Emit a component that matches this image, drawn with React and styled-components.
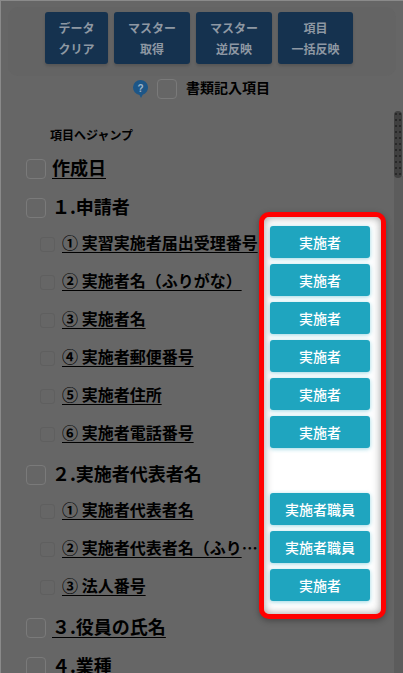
import React from "react";
import styled, { createGlobalStyle } from "styled-components";

const Global = createGlobalStyle`
  html, body { margin: 0; padding: 0; height: 100%; overflow: hidden; background: #666; }
  * { box-sizing: border-box; }
  #root { height: 100%; }
`;

const Page = styled.div`
  position: relative;
  width: 403px;
  height: 673px;
  overflow: hidden;
  background: #666;
  border-top: 1px solid #8a8a8a;
  border-left: 1px solid #8a8a8a;
  font-family: "Noto Sans CJK JP", "Noto Sans", sans-serif;
  color: #000;
`;

const TopPanel = styled.div`
  margin: 6px 7px 0 7px;
  height: 69px;
  padding: 5px 6px 0 0;
  border-radius: 10px;
  background: #646464;
  display: flex;
  justify-content: center;
  gap: 6px;
`;

const ToolButton = styled.div`
  width: ${(p) => p.$w}px;
  height: 52px;
  border-radius: 3px;
  background: #15324f;
  color: #8e98a3;
  font-size: 12px;
  font-weight: 700;
  line-height: 21px;
  display: flex;
  flex-direction: column;
  align-items: center;
  justify-content: center;
  box-shadow: 0 2px 3px rgba(0, 0, 0, 0.15);
`;

const DocRow = styled.div`
  display: flex;
  align-items: center;
  justify-content: center;
  height: 20px;
  margin-top: 3px;
  gap: 9px;
  padding-right: 1px;
  font-size: 14px;
  line-height: 18px;
  font-weight: 700;
`;

const DocLabel = styled.span`
  position: relative;
  top: -2px;
`;

const HelpIcon = styled.svg`
  width: 15px;
  height: 18px;
`;

const DocBox = styled.span`
  width: 20px;
  height: 20px;
  border: 1px solid #7a7a7a;
  border-radius: 4px;
`;

const JumpLabel = styled.div`
  margin: 28px 0 0 49px;
  font-size: 12px;
  line-height: 16px;
  font-weight: 700;
`;

const List = styled.div`
  margin-top: 7px;
  padding-left: 25px;
  display: flex;
  flex-direction: column;
`;

const Row = styled.div`
  display: flex;
  align-items: center;
  height: ${(p) => p.$h}px;
  margin-top: ${(p) => p.$mt || 0}px;
`;

const HeadBox = styled.span`
  flex: none;
  width: 20px;
  height: 20px;
  border: 1px solid #7a7a7a;
  border-radius: 4px;
  margin-right: 6px;
`;

const SubBox = styled.span`
  flex: none;
  width: 15px;
  height: 15px;
  margin-left: 14px;
  margin-right: 7px;
  border: 1px solid #5f5f5f;
  border-radius: 3px;
  background: #666;
`;

const HeadText = styled.span`
  font-size: 18px;
  font-weight: 700;
  line-height: 24px;
  position: relative;
  top: -2px;
  text-decoration: ${(p) => (p.$link ? "underline" : "none")};
  text-underline-offset: 3px;
`;

const SubText = styled.div`
  width: 196px;
  overflow: hidden;
  white-space: nowrap;
  text-overflow: ellipsis;
  font-size: 16px;
  line-height: 26px;
  font-weight: 700;
  position: relative;
  top: -2px;
`;

const SubLink = styled.span`
  text-decoration: underline;
  text-underline-offset: 3px;
`;

const ScrollTrack = styled.div`
  position: absolute;
  right: 0;
  top: 175px;
  bottom: 0;
  width: 9px;
  background: #5c5c5c;
`;

const ScrollThumb = styled.div`
  position: absolute;
  right: 1px;
  top: 110px;
  width: 8px;
  height: 67px;
  border-radius: 4px;
  background-color: #404040;
  background-image: radial-gradient(circle, #262626 0.7px, transparent 0.8px);
  background-size: 4px 6px;
`;

const Highlight = styled.div`
  position: absolute;
  left: 258px;
  top: 211px;
  width: 127px;
  height: 407px;
  padding: 9px 0 0 6px;
  border: 5px solid #ff0000;
  border-radius: 10px;
  background: #fff;
  box-shadow: 0 2px 6px rgba(0, 0, 0, 0.3), inset 0 0 8px rgba(70, 70, 70, 0.55);
  display: flex;
  flex-direction: column;
`;

const RoleButton = styled.div`
  flex: none;
  width: 100px;
  height: 32px;
  margin-bottom: 6px;
  border-radius: 3px;
  background: #1fa5bf;
  color: #fff;
  font-size: 14px;
  font-weight: 500;
  display: flex;
  align-items: center;
  justify-content: center;
  box-shadow: 0 1px 4px rgba(31, 165, 191, 0.45);
`;

const RoleGap = styled.div`
  flex: none;
  height: 39px;
`;

const tools = [
  { w: 63, a: "データ", b: "クリア" },
  { w: 76, a: "マスター", b: "取得" },
  { w: 76, a: "マスター", b: "逆反映" },
  { w: 75, a: "項目", b: "一括反映" },
];

const Head = ({ children, link, h = 38, mt }) => (
  <Row $h={h} $mt={mt}>
    <HeadBox />
    <HeadText $link={link}>{children}</HeadText>
  </Row>
);

const Sub = ({ children, h = 38 }) => (
  <Row $h={h}>
    <SubBox />
    <SubText>
      <SubLink>{children}</SubLink>
    </SubText>
  </Row>
);

const Role = ({ children }) => <RoleButton>{children}</RoleButton>;

export default function App() {
  return (
    <Page>
      <Global />
      <TopPanel>
        {tools.map((t) => (
          <ToolButton key={t.a + t.b} $w={t.w}>
            <span>{t.a}</span>
            <span>{t.b}</span>
          </ToolButton>
        ))}
      </TopPanel>
      <DocRow>
        <HelpIcon viewBox="0 0 15 18">
          <path d="M7.5 0a7.5 7.5 0 0 1 2.2 14.67L8 18l-1.5-3.07A7.5 7.5 0 0 1 7.5 0z" fill="#1d5687" />
          <text x="7.5" y="11.5" textAnchor="middle" fontSize="10" fontWeight="700" fill="#9db4c8" fontFamily="Liberation Sans, sans-serif">?</text>
        </HelpIcon>
        <DocBox />
        <DocLabel>書類記入項目</DocLabel>
      </DocRow>
      <JumpLabel>項目へジャンプ</JumpLabel>
      <List>
        <Head link>作成日</Head>
        <Head mt={2} h={35}>１.申請者</Head>
        <Sub>① 実習実施者届出受理番号</Sub>
        <Sub>② 実施者名（ふりがな）</Sub>
        <Sub>③ 実施者名</Sub>
        <Sub>④ 実施者郵便番号</Sub>
        <Sub>⑤ 実施者住所</Sub>
        <Sub>⑥ 実施者電話番号</Sub>
        <Head mt={4} h={35}>２.実施者代表者名</Head>
        <Sub>① 実施者代表者名</Sub>
        <Sub>② 実施者代表者名（ふりがな）</Sub>
        <Sub>③ 法人番号</Sub>
        <Head link mt={3}>３.役員の氏名</Head>
        <Head mt={1}>４.業種</Head>
      </List>
      <ScrollTrack />
      <ScrollThumb />
      <Highlight>
        <Role>実施者</Role>
        <Role>実施者</Role>
        <Role>実施者</Role>
        <Role>実施者</Role>
        <Role>実施者</Role>
        <Role>実施者</Role>
        <RoleGap />
        <Role>実施者職員</Role>
        <Role>実施者職員</Role>
        <Role>実施者</Role>
      </Highlight>
    </Page>
  );
}
